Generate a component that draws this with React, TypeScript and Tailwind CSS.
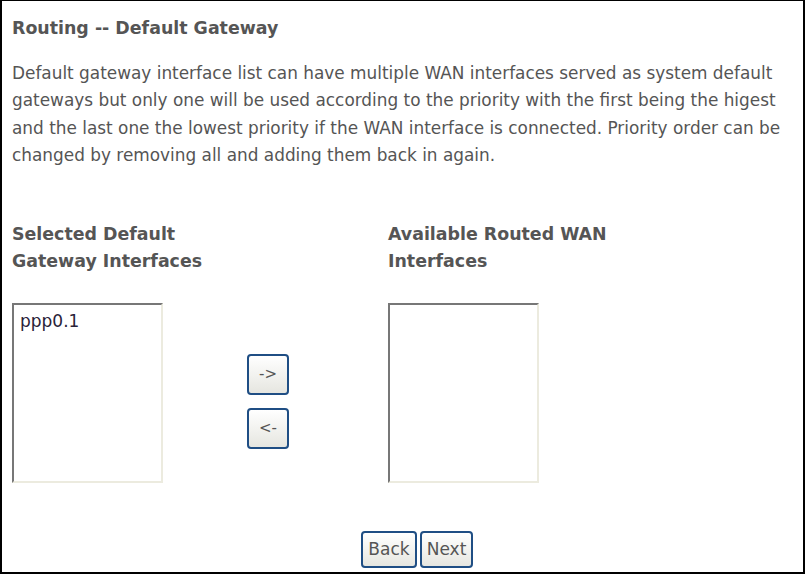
const LINES = [
  'Default gateway interface list can have multiple WAN interfaces served as system default',
  'gateways but only one will be used according to the priority with the first being the higest',
  'and the last one the lowest priority if the WAN interface is connected. Priority order can be',
  'changed by removing all and adding them back in again.',
];

function Btn({ label, className = '' }: { label: string; className?: string }) {
  return (
    <button
      type="button"
      className={`rounded-[4px] border-2 border-[#1f4e84] bg-gradient-to-b from-white to-[#e6e6e0] text-[#555] leading-none ${className}`}
    >
      {label}
    </button>
  );
}

function ListBox({ items }: { items: string[] }) {
  return (
    <div className="w-[151px] h-[180px] bg-white border-2 border-t-[#777] border-l-[#777] border-r-[#ecebdf] border-b-[#ecebdf] px-[6px] pt-[6px]">
      {items.map(i => (
        <div key={i} className="text-[17px] leading-[20px] text-[#2a2238]">{i}</div>
      ))}
    </div>
  );
}

export default function App() {
  return (
    <div
      className="w-[805px] h-[574px] bg-white border-2 border-t-[1px] border-black pl-[10px] flex flex-col text-[#555]"
      style={{ fontFamily: 'Tahoma, "DejaVu Sans", Verdana, sans-serif' }}
    >
      <h1 className="mt-[16px] text-[17.4px] leading-[22px] font-bold whitespace-nowrap">Routing -- Default Gateway</h1>

      <div className="mt-[21px] text-[16.9px] leading-[27.4px] whitespace-nowrap">
        {LINES.map(l => (
          <div key={l}>{l}</div>
        ))}
      </div>

      <div className="mt-[51px] flex">
        <div className="w-[376px] flex flex-col">
          <div className="text-[17.4px] leading-[27px] font-bold whitespace-nowrap">
            Selected Default
            <br />
            Gateway Interfaces
          </div>
          <div className="mt-[28px] flex">
            <ListBox items={['ppp0.1']} />
            <div className="ml-[84px] mt-[51px] flex flex-col gap-[13px]">
              <Btn label="->" className="w-[42px] h-[41px] text-[15px]" />
              <Btn label="<-" className="w-[42px] h-[41px] text-[15px]" />
            </div>
          </div>
        </div>
        <div className="flex flex-col">
          <div className="text-[17.4px] leading-[27px] font-bold whitespace-nowrap">
            Available Routed WAN
            <br />
            Interfaces
          </div>
          <div className="mt-[28px]">
            <ListBox items={[]} />
          </div>
        </div>
      </div>

      <div className="mt-[48px] ml-[349px] flex gap-[3px]">
        <Btn label="Back" className="w-[56px] h-[37px] text-[17px]" />
        <Btn label="Next" className="w-[53px] h-[37px] text-[17px]" />
      </div>
    </div>
  );
}
